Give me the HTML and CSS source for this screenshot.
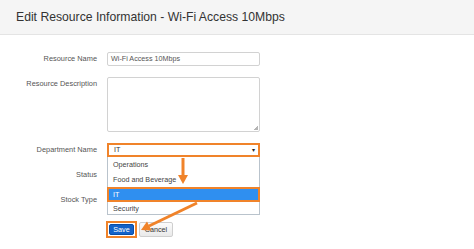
FILE: index.html
```html
<!DOCTYPE html>
<html lang="en">
<head>
  <meta charset="UTF-8" />
  <title>Edit Resource Information</title>
  <link rel="stylesheet" href="styles.css">
</head>
<body>

  <div class="page-header">
    <h1>Edit Resource Information - Wi-Fi Access 10Mbps</h1>
  </div>

  <div class="resource-form">
    <div class="form-row">
      <label>Resource Name</label>
      <div class="control">Wi-Fi Access 10Mbps</div>
    </div>

    <div class="form-row">
      <label>Resource Description</label>
      <div class="control textarea"><span class="grip"></span></div>
    </div>

    <div class="form-row">
      <label>Department Name</label>
      <div class="select-wrap">
        <div class="control select highlight">IT <span class="caret">&#9662;</span></div>
        <ul class="dropdown">
          <li>Operations</li>
          <li>Food and Beverage</li>
          <li class="selected">IT</li>
          <li>Security</li>
        </ul>
      </div>
    </div>

    <!-- these two selects sit under the open dropdown -->
    <div class="form-row">
      <label>Status</label>
      <div class="control select"></div>
    </div>

    <div class="form-row">
      <label>Stock Type</label>
      <div class="control select"></div>
    </div>

    <div class="button-row">
      <span class="save-outline"><button class="btn btn-save">Save</button></span>
      <button class="btn btn-cancel">Cancel</button>
    </div>
  </div>

  <!-- callout arrows drawn over the form -->
  <svg class="callouts" width="474" height="249" viewBox="0 0 474 249">
    <line x1="183" y1="158" x2="183" y2="176" stroke="#f0832a" stroke-width="3"/>
    <polygon points="178,175 188,175 183,184" fill="#f0832a"/>
    <line x1="197" y1="203" x2="149" y2="226" stroke="#f0832a" stroke-width="3"/>
    <polygon points="141,230 151.5,230.6 147,221.4" fill="#f0832a"/>
  </svg>

</body>
</html>
```

FILE: styles.css
```css
body {
  margin: 0;
  padding: 0;
  font-family: "Liberation Sans", Arial, sans-serif;
  background-color: #fff;
  position: relative;
  width: 474px;
  height: 249px;
  overflow: hidden;
}

.page-header {
  height: 34px;
  background-color: #f5f5f5;
  border-bottom: 1px solid #e4e4e4;
  padding-left: 16px;
  display: flex;
  align-items: center;
}

.page-header h1 {
  margin: 0;
  font-size: 12.2px;
  font-weight: normal;
  color: #333;
}

.resource-form {
  padding-top: 17px;
}

.form-row {
  display: flex;
  align-items: flex-start;
  gap: 10px;
  margin-bottom: 11px;
}

.form-row label {
  width: 97px;
  text-align: right;
  font-size: 7.4px;
  line-height: 14px;
  color: #555;
}

.control {
  width: 153px;
  height: 14px;
  box-sizing: border-box;
  border: 1px solid #d2d2d2;
  border-radius: 2px;
  padding: 0 3px;
  font-size: 7.2px;
  line-height: 12px;
  color: #555;
  background: #fff;
}

.textarea {
  height: 55px;
  position: relative;
}

.grip {
  position: absolute;
  right: 1px;
  bottom: 1px;
  width: 4px;
  height: 4px;
  background: linear-gradient(135deg, transparent 50%, #b5b5b5 50%);
}

.select-wrap {
  position: relative;
}

.select {
  color: #333;
  position: relative;
}

.highlight {
  border: 2px solid #f0832a;
  border-radius: 0;
  line-height: 10px;
  padding-left: 5px;
}

.caret {
  position: absolute;
  right: 3px;
  top: 0;
  font-size: 6px;
  color: #222;
}

.dropdown {
  position: absolute;
  top: 14px;
  left: 0;
  width: 153px;
  height: 58px;
  box-sizing: border-box;
  margin: 0;
  padding: 1px 0 0;
  list-style: none;
  background: #fff;
  border: 1px solid #b9c3cc;
  border-top: none;
  z-index: 2;
}

.dropdown li {
  height: 14.5px;
  line-height: 14.5px;
  padding-left: 5px;
  font-size: 7.2px;
  color: #444;
}

.dropdown li.selected {
  height: 15px;
  line-height: 15px;
  background-color: #2f8ff0;
  color: #fff;
  box-shadow: 0 0 0 2px #f0832a inset;
  margin: 0 -1px;
  padding-left: 6px;
}

.button-row {
  display: flex;
  align-items: center;
  gap: 2px;
  padding-left: 106px;
  margin-top: 14px;
}

.save-outline {
  display: inline-flex;
  border: 2px solid #f0832a;
  padding: 1px;
}

.btn {
  font-family: "Liberation Sans", Arial, sans-serif;
  font-size: 7.2px;
  border-radius: 2px;
  cursor: pointer;
}

.btn-save {
  width: 25px;
  height: 11px;
  padding: 0;
  background-color: #1462c8;
  border: 1px solid #0b4ea6;
  color: #fff;
}

.btn-cancel {
  width: 34px;
  height: 15px;
  padding: 0;
  background: linear-gradient(#fcfcfc, #e9e9e9);
  border: 1px solid #cfcfcf;
  color: #333;
}

.callouts {
  position: absolute;
  top: 0;
  left: 0;
  pointer-events: none;
  z-index: 3;
}
```
